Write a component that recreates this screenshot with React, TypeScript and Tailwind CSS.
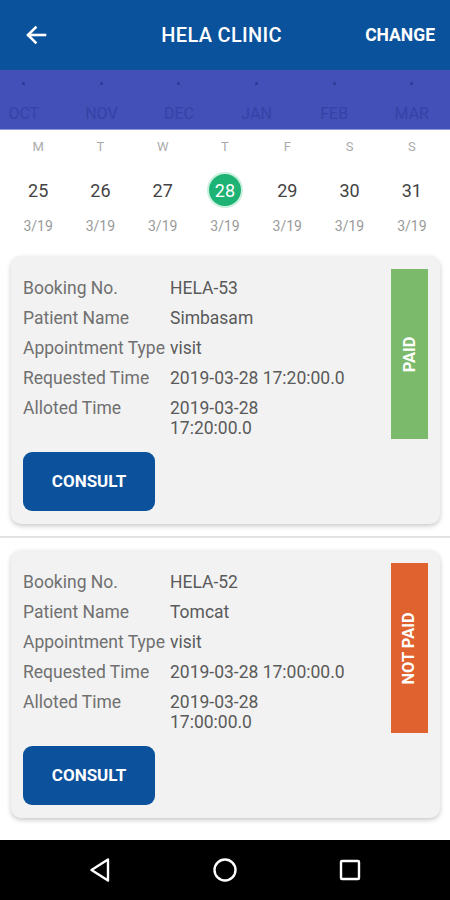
import React from "react";

const months = ["OCT", "NOV", "DEC", "JAN", "FEB", "MAR"];
const days = [
  { l: "M", n: "25" },
  { l: "T", n: "26" },
  { l: "W", n: "27" },
  { l: "T", n: "28", sel: true },
  { l: "F", n: "29" },
  { l: "S", n: "30" },
  { l: "S", n: "31" },
];

type Booking = {
  no: string;
  name: string;
  req: string;
  d: string;
  t: string;
  paid: boolean;
};

const bookings: Booking[] = [
  { no: "HELA-53", name: "Simbasam", req: "2019-03-28 17:20:00.0", d: "2019-03-28", t: "17:20:00.0", paid: true },
  { no: "HELA-52", name: "Tomcat", req: "2019-03-28 17:00:00.0", d: "2019-03-28", t: "17:00:00.0", paid: false },
];

function Row({ label, children }: { label: string; children: React.ReactNode }) {
  return (
    <div className="flex py-[5px] leading-[20px]">
      <div className="w-[147px] shrink-0 whitespace-nowrap text-[#707070]">{label}</div>
      <div className="text-[#5a5a5a]">{children}</div>
    </div>
  );
}

function Card({ b }: { b: Booking }) {
  return (
    <div className="mx-[11px] mr-[10px] flex rounded-[10px] bg-[#f2f2f2] py-[13px] pl-[12px] pr-[12px] shadow-[0_2px_5px_rgba(0,0,0,0.22)]">
      <div className="flex-1 pt-[4px] text-[17.5px]">
        <Row label="Booking No.">{b.no}</Row>
        <Row label="Patient Name">{b.name}</Row>
        <Row label="Appointment Type">visit</Row>
        <Row label="Requested Time">{b.req}</Row>
        <Row label="Alloted Time">
          <div>{b.d}</div>
          <div>{b.t}</div>
        </Row>
        <button className="mt-[9px] flex h-[59px] w-[132px] items-center justify-center rounded-[9px] bg-[#0b519c] text-[17px] font-bold text-white">
          CONSULT
        </button>
      </div>
      <div
        className={`flex h-[170px] w-[37px] shrink-0 items-center justify-center ${
          b.paid ? "bg-[#7aba6a]" : "bg-[#e0632f]"
        }`}
      >
        <span className="-rotate-90 whitespace-nowrap text-[16.5px] font-bold text-white">
          {b.paid ? "PAID" : "NOT PAID"}
        </span>
      </div>
    </div>
  );
}

export default function App() {
  return (
    <div className="flex h-[900px] w-[450px] flex-col bg-white font-['Roboto',sans-serif]">
      {/* header */}
      <div className="flex h-[70px] items-center bg-[#0a529c] px-[24px] text-white">
        <svg width="24" height="24" viewBox="0 0 24 24" fill="none" stroke="white" strokeWidth="2.6" strokeLinecap="square">
          <path d="M21 12H4.5" />
          <path d="M11.5 4.5L4 12l7.5 7.5" />
        </svg>
        <div className="flex-1 pl-[30px] text-center text-[20px] font-medium tracking-[0.3px]">HELA CLINIC</div>
        <div className="text-[17.5px] font-bold" style={{ marginRight: -9 }}>CHANGE</div>
      </div>
      {/* months */}
      <div className="h-[60px] overflow-hidden border-b border-[#8f98dc] bg-[#4250b8]">
        <div className="ml-[-15px] flex">
          {months.map((m) => (
            <div key={m} className="flex w-[77.6px] shrink-0 flex-col items-center">
              <div className="mt-[12px] h-[3px] w-[3px] rounded-full bg-[#2d3a94]" />
              <div className="mt-[19px] text-[16px] leading-[20px] text-[#3543a6]">{m}</div>
            </div>
          ))}
        </div>
      </div>
      {/* days */}
      <div className="grid grid-cols-7 px-[7px] pt-[7px]">
        {days.map((d, i) => (
          <div key={i} className="flex flex-col items-center">
            <div className="text-[13px] leading-[20px] text-[#ababab]">{d.l}</div>
            <div className="mt-[17px] flex h-[32px] w-[32px] items-center justify-center">
              {d.sel ? (
                <div className="flex h-[32px] w-[32px] items-center justify-center rounded-full bg-[#1db374] text-[18px] text-white shadow-[0_0_0_2px_#c8f0dc]">
                  {d.n}
                </div>
              ) : (
                <span className="text-[18px] text-[#444]">{d.n}</span>
              )}
            </div>
            <div className="mt-[10px] text-[14px] leading-[20px] text-[#9a9a9a]">3/19</div>
          </div>
        ))}
      </div>
      {/* list */}
      <div className="mt-[20px] flex flex-col">
        <Card b={bookings[0]} />
        <div className="mt-[12px] h-[2px] bg-[#e2e2e2]" />
        <div className="mt-[12px]">
          <Card b={bookings[1]} />
        </div>
      </div>
      <div className="flex-1" />
      {/* nav bar */}
      <div className="flex h-[60px] items-center bg-black">
        <div className="flex w-[200px] justify-center">
          <svg width="24" height="26" viewBox="0 0 24 26" fill="none" stroke="white" strokeWidth="2.4" strokeLinejoin="round">
            <path d="M20 2.5L3.5 13 20 23.5Z" />
          </svg>
        </div>
        <div className="flex w-[50px] justify-center">
          <svg width="26" height="26" viewBox="0 0 26 26" fill="none" stroke="white" strokeWidth="2.4">
            <circle cx="13" cy="13" r="10.5" />
          </svg>
        </div>
        <div className="flex w-[200px] justify-center">
          <svg width="22" height="22" viewBox="0 0 22 22" fill="none" stroke="white" strokeWidth="2.4">
            <rect x="2" y="2" width="18" height="18" rx="1" />
          </svg>
        </div>
      </div>
    </div>
  );
}
